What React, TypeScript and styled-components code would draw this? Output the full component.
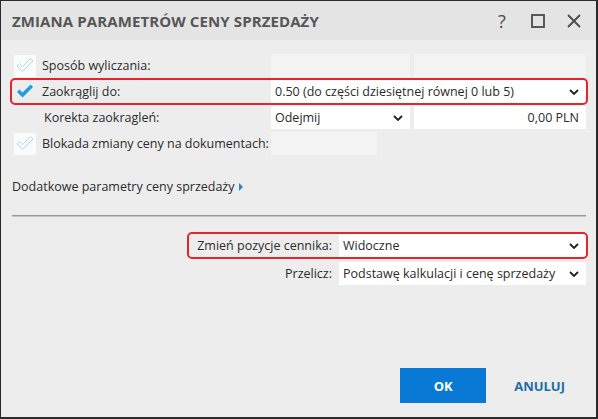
import React from "react";
import styled, { createGlobalStyle } from "styled-components";

const Global = createGlobalStyle`
  html, body { margin: 0; padding: 0; background: #ededed; }
  body { font-family: "Open Sans", "Noto Sans", sans-serif; }
  * { box-sizing: border-box; }
`;

const Window = styled.div`
  width: 598px;
  height: 419px;
  border: 1px solid #2a2a2a;
  border-right-width: 2px;
  border-bottom-width: 2px;
  background: #ededed;
  display: flex;
  flex-direction: column;
  color: #2b2b2b;
  font-size: 12.5px;
`;

const TitleBar = styled.div`
  height: 39px;
  background: #e4e4e4;
  display: flex;
  align-items: center;
  padding: 0 0 0 11px;
`;

const Title = styled.div`
  flex: 1;
  font-weight: 700;
  font-size: 15px;
  color: #565656;
  letter-spacing: 0.1px;
`;

const TitleButtons = styled.div`
  display: flex;
  align-items: center;
  margin-right: 4px;
`;

const TitleBtn = styled.div`
  width: 36px;
  height: 30px;
  display: flex;
  align-items: center;
  justify-content: center;
  color: #4a4a4a;
  font-size: 18px;
`;

const Body = styled.div`
  flex: 1;
  padding: 14px 10px 0 11px;
  display: flex;
  flex-direction: column;
`;

const Form = styled.div`
  display: flex;
  flex-direction: column;
  gap: 3px;
`;

const Row = styled.div<{ $hl?: boolean }>`
  display: flex;
  align-items: stretch;
  height: 23px;
  border-radius: 3px;
  ${(p) => (p.$hl ? "outline: 2px solid #e3262e; outline-offset: 0px;" : "")}
`;

const CheckCell = styled.div`
  width: 30px;
  display: flex;
  align-items: center;
  justify-content: flex-start;
  padding-left: 2px;
`;

const CheckBox = styled.div<{ $on?: boolean }>`
  width: 22px;
  height: 22px;
  display: flex;
  align-items: center;
  justify-content: center;
  background: ${(p) => (p.$on ? "transparent" : "#fbfbfb")};
`;

const Label = styled.div<{ $indent?: boolean }>`
  width: 229px;
  display: flex;
  align-items: center;
  padding-left: ${(p) => (p.$indent ? "2px" : "0")};
`;

const Values = styled.div`
  flex: 1;
  display: flex;
  gap: 4px;
`;

const Field = styled.div<{ $w?: number; $disabled?: boolean; $right?: boolean }>`
  ${(p) => (p.$w ? `width: ${p.$w}px;` : "flex: 1;")}
  background: ${(p) => (p.$disabled ? "#f3f3f3" : "#ffffff")};
  display: flex;
  align-items: center;
  justify-content: ${(p) => (p.$right ? "flex-end" : "space-between")};
  padding: 0 7px 0 4px;
  white-space: nowrap;
`;

const Chevron = () => (
  <svg width="10" height="6" viewBox="0 0 10 6">
    <polyline points="1,1 5,5 9,1" fill="none" stroke="#222" strokeWidth="1.8" />
  </svg>
);

const Check = ({ on }: { on?: boolean }) => (
  <svg width="18" height="15" viewBox="0 0 18 15">
    <polygon
      points="1,8 3.4,5.6 6.5,8.6 14.6,0.6 17,3 6.5,13.4"
      fill={on ? "#1c9ee0" : "none"}
      stroke={on ? "none" : "#a6d9f2"}
      strokeWidth="1"
      strokeLinejoin="round"
    />
  </svg>
);

const MoreLink = styled.div`
  margin-top: 21px;
  display: flex;
  align-items: center;
  gap: 5px;
  height: 20px;
`;

const Tri = styled.span`
  width: 0;
  height: 0;
  border-left: 4px solid #1a8ad4;
  border-top: 4px solid transparent;
  border-bottom: 4px solid transparent;
  margin-top: 1px;
`;

const Separator = styled.div`
  margin-top: 19px;
  height: 2px;
  border-top: 1px solid #9a9a9a;
  border-bottom: 1px solid #c4c4c4;
`;

const LowerForm = styled.div`
  margin-top: 17px;
  display: flex;
  flex-direction: column;
  align-items: flex-end;
  gap: 4px;
`;

const LowerRow = styled.div<{ $hl?: boolean }>`
  display: flex;
  height: 23px;
  gap: 7px;
  border-radius: 3px;
  padding-left: 8px;
  ${(p) => (p.$hl ? "outline: 2px solid #e3262e; margin-bottom: 1px;" : "")}
`;

const LowerLabel = styled.div`
  display: flex;
  align-items: center;
  justify-content: flex-end;
`;

const LowerField = styled(Field)`
  width: 247px;
  flex: none;
`;

const Footer = styled.div`
  margin-top: auto;
  display: flex;
  justify-content: flex-end;
  align-items: center;
  gap: 28px;
  padding: 0 21px 14px 0;
`;

const OkButton = styled.button`
  width: 86px;
  height: 35px;
  border: none;
  background: #0a79d6;
  color: #fff;
  font-family: inherit;
  font-weight: 700;
  font-size: 13px;
`;

const CancelButton = styled.button`
  border: none;
  background: transparent;
  color: #1d6fa8;
  font-family: inherit;
  font-weight: 700;
  font-size: 13px;
  padding: 0;
`;

export default function App() {
  return (
    <>
      <Global />
      <Window>
        <TitleBar>
          <Title>ZMIANA PARAMETRÓW CENY SPRZEDAŻY</Title>
          <TitleButtons>
            <TitleBtn>?</TitleBtn>
            <TitleBtn>
              <svg width="14" height="14" viewBox="0 0 14 14">
                <rect x="1" y="1" width="12" height="12" fill="none" stroke="#4a4a4a" strokeWidth="1.8" />
              </svg>
            </TitleBtn>
            <TitleBtn>
              <svg width="14" height="14" viewBox="0 0 14 14">
                <path d="M1 1 L13 13 M13 1 L1 13" stroke="#4a4a4a" strokeWidth="1.8" />
              </svg>
            </TitleBtn>
          </TitleButtons>
        </TitleBar>
        <Body>
          <Form>
            <Row>
              <CheckCell>
                <CheckBox><Check /></CheckBox>
              </CheckCell>
              <Label>Sposób wyliczania:</Label>
              <Values>
                <Field $w={139} $disabled />
                <Field $disabled />
              </Values>
            </Row>
            <Row $hl>
              <CheckCell>
                <CheckBox $on><Check on /></CheckBox>
              </CheckCell>
              <Label>Zaokrąglij do:</Label>
              <Values>
                <Field>
                  <span>0.50 (do części dziesiętnej równej 0 lub 5)</span>
                  <Chevron />
                </Field>
              </Values>
            </Row>
            <Row>
              <CheckCell />
              <Label $indent>Korekta zaokragleń:</Label>
              <Values>
                <Field $w={139}>
                  <span>Odejmij</span>
                  <Chevron />
                </Field>
                <Field $right>0,00 PLN</Field>
              </Values>
            </Row>
            <Row>
              <CheckCell>
                <CheckBox><Check /></CheckBox>
              </CheckCell>
              <Label>Blokada zmiany ceny na dokumentach:</Label>
              <Values>
                <Field $w={106} $disabled />
              </Values>
            </Row>
          </Form>
          <MoreLink>
            <span>Dodatkowe parametry ceny sprzedaży</span>
            <Tri />
          </MoreLink>
          <Separator />
          <LowerForm>
            <LowerRow $hl>
              <LowerLabel>Zmień pozycje cennika:</LowerLabel>
              <LowerField>
                <span>Widoczne</span>
                <Chevron />
              </LowerField>
            </LowerRow>
            <LowerRow>
              <LowerLabel>Przelicz:</LowerLabel>
              <LowerField>
                <span>Podstawę kalkulacji i cenę sprzedaży</span>
                <Chevron />
              </LowerField>
            </LowerRow>
          </LowerForm>
          <Footer>
            <OkButton>OK</OkButton>
            <CancelButton>ANULUJ</CancelButton>
          </Footer>
        </Body>
      </Window>
    </>
  );
}
